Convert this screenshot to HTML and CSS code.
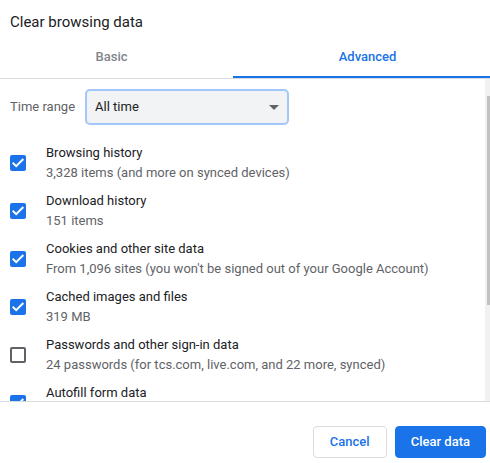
FILE: index.html
```html
<!DOCTYPE html>
<html lang="en">
<head>
<meta charset="utf-8">
<title>Clear browsing data</title>
<link rel="stylesheet" href="styles.css">
</head>
<body>
<main class="dialog">
  <h1 class="title">Clear browsing data</h1>
  <div class="tabs" role="tablist">
    <button class="tab tab-basic" type="button" role="tab" aria-selected="false">Basic</button>
    <button class="tab tab-advanced" type="button" role="tab" aria-selected="true">Advanced</button>
  </div>
  <div class="body">
    <div class="content">
      <div class="range">
        <label for="range">Time range</label>
        <div class="select-wrap">
          <select id="range" class="select"><option>All time</option></select>
          <svg class="arrow" viewBox="0 0 10 5" aria-hidden="true"><path d="M0 0h10L5 5z"/></svg>
        </div>
      </div>
      <label class="row">
        <input class="check" type="checkbox" checked>
        <span class="text"><span class="name">Browsing history</span><span class="detail">3,328 items (and more on synced devices)</span></span>
      </label>
      <label class="row">
        <input class="check" type="checkbox" checked>
        <span class="text"><span class="name">Download history</span><span class="detail">151 items</span></span>
      </label>
      <label class="row">
        <input class="check" type="checkbox" checked>
        <span class="text"><span class="name">Cookies and other site data</span><span class="detail">From 1,096 sites (you won't be signed out of your Google Account)</span></span>
      </label>
      <label class="row">
        <input class="check" type="checkbox" checked>
        <span class="text"><span class="name">Cached images and files</span><span class="detail">319 MB</span></span>
      </label>
      <label class="row">
        <input class="check" type="checkbox">
        <span class="text"><span class="name">Passwords and other sign-in data</span><span class="detail">24 passwords (for tcs.com, live.com, and 22 more, synced)</span></span>
      </label>
      <label class="row">
        <input class="check" type="checkbox" checked>
        <span class="text"><span class="name">Autofill form data</span></span>
      </label>
    </div>
    <div class="track"><div class="thumb"></div></div>
  </div>
  <footer class="footer">
    <button class="button" type="button">Cancel</button>
    <button class="button primary" type="button">Clear data</button>
  </footer>
</main>
</body>
</html>
```
FILE: styles.css
```css
* {
  box-sizing: border-box;
}

body {
  margin: 0;
  background: #fff;
  color: #202124;
  font: 13px/20px Roboto, sans-serif;
}

.dialog {
  display: flex;
  flex-direction: column;
  height: 100vh;
}

.title {
  margin: 0;
  padding: 12px 10px 4px;
  font-size: 15px;
  font-weight: 400;
  line-height: 20px;
}

.tabs {
  display: grid;
  grid-template-columns: 233fr 257fr;
  height: 43px;
  border-bottom: 1px solid #dadce0;
}

.tab {
  padding: 2px 10px 0;
  border: 0;
  border-bottom: 2px solid transparent;
  background: none;
  color: #80868b;
  font: 500 13px/20px Roboto, sans-serif;
}

.tab-basic {
  padding-left: 0;
}

.tab-advanced {
  padding-left: 12px;
  padding-right: 0;
  border-color: #1a73e8;
  color: #1a73e8;
}

.body {
  display: flex;
  flex: 1;
  min-height: 0;
  overflow: hidden;
}

.content {
  flex: 1;
  padding: 10px 10px 0;
}

.range {
  display: flex;
  align-items: center;
  gap: 10px;
  margin-bottom: 14px;
  color: #5f6368;
}

.select-wrap {
  display: flex;
  align-items: center;
  position: relative;
}

.select {
  width: 204px;
  height: 36px;
  padding: 0 8px;
  appearance: none;
  border: 2px solid #a3c7fa;
  border-radius: 5px;
  background: #f1f3f4;
  color: #202124;
  font: 13px/20px Roboto, sans-serif;
}

.arrow {
  position: absolute;
  right: 10px;
  width: 10px;
  height: 5px;
  fill: #5f6368;
  pointer-events: none;
}

.row {
  display: flex;
  align-items: center;
  gap: 20px;
  height: 48px;
}

.check {
  flex: none;
  width: 16px;
  height: 16px;
  margin: 0;
  appearance: none;
  border: 2px solid #5f6368;
  border-radius: 2px;
}

.check:checked {
  border: 0;
  background: #1a73e8 url("data:image/svg+xml,%3Csvg xmlns='http://www.w3.org/2000/svg' viewBox='0 0 16 16'%3E%3Cpath d='M2.7 7.7l3.5 3.5L13.3 4' fill='none' stroke='white' stroke-width='2'/%3E%3C/svg%3E") center / 16px;
}

.text {
  display: flex;
  flex-direction: column;
  height: 40px;
}

.detail {
  color: #5f6368;
}

.track {
  width: 5px;
  padding: 17px 0 0 2px;
  background: #f1f1f1;
}

.thumb {
  height: 209px;
  background: #c1c1c1;
}

.footer {
  display: flex;
  justify-content: flex-end;
  gap: 8px;
  padding: 24px 4px 5px;
  border-top: 1px solid #dadce0;
}

.button {
  min-width: 74px;
  height: 32px;
  padding: 0 15px;
  border: 1px solid #dadce0;
  border-radius: 4px;
  background: #fff;
  color: #1a73e8;
  font: 500 13px/20px Roboto, sans-serif;
}

.primary {
  border-color: #1a73e8;
  background: #1a73e8;
  color: #fff;
}
```
